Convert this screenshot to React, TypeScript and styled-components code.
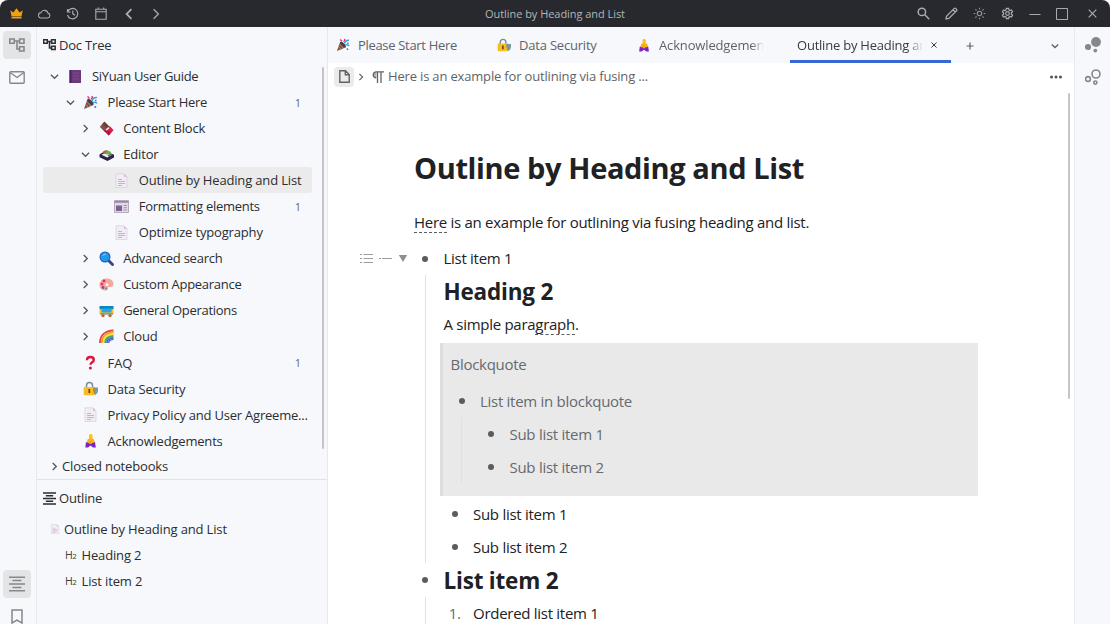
import React from "react";
import styled, { createGlobalStyle } from "styled-components";

const Global = createGlobalStyle`
  * { box-sizing: border-box; }
  html, body { margin: 0; padding: 0; background: #fff; overflow: hidden; }
  body { font-family: "Open Sans", "Noto Sans", sans-serif; color: #2b2d31; }
  svg { display: block; flex: none; }
`;

const Window = styled.div`
  width: 1110px;
  height: 624px;
  display: flex;
  flex-direction: column;
  overflow: hidden;
  border-radius: 8px 8px 0 0;
  background: #f6f8fb;
`;

const TitleBar = styled.header`
  height: 27px;
  flex: none;
  display: grid;
  grid-template-columns: 1fr auto 1fr;
  align-items: center;
  background: #27292f;
  color: #a9abae;
`;
const BarTitle = styled.div`
  font-size: 11px;
  line-height: 16px;
  letter-spacing: -0.05px;
  color: #b4b6b9;
  white-space: nowrap;
`;
const BarIcons = styled.div<{ $end?: boolean }>`
  display: flex;
  align-items: center;
  justify-content: ${(p) => (p.$end ? "flex-end" : "flex-start")};
  padding-left: ${(p) => (p.$end ? 0 : 3)}px;
`;
const BarButton = styled.span<{ $w?: number }>`
  width: ${(p) => p.$w ?? 27.9}px;
  height: 27px;
  display: flex;
  align-items: center;
  justify-content: center;
`;

const Body = styled.div`
  flex: 1;
  min-height: 0;
  display: flex;
`;
const Dock = styled.nav<{ $right?: boolean }>`
  width: ${(p) => (p.$right ? 36 : 37)}px;
  flex: none;
  display: flex;
  flex-direction: column;
  align-items: center;
  padding-top: 4px;
  padding-${(p) => (p.$right ? "left" : "right")}: ${(p) => (p.$right ? 1 : 2)}px;
  border-${(p) => (p.$right ? "left" : "right")}: 1px solid #e8eaed;
  color: #85878a;
`;
const DockButton = styled.span<{ $active?: boolean }>`
  width: 28px;
  height: 28px;
  flex: none;
  margin-bottom: 4px;
  border-radius: 4px;
  display: flex;
  align-items: center;
  justify-content: center;
  background: ${(p) => (p.$active ? "#e3e4e6" : "transparent")};
`;
const LastDockButton = styled(DockButton)`
  margin-bottom: -6px;
`;
const Spacer = styled.div`
  flex: 1;
`;

const Panel = styled.aside`
  width: 291px;
  flex: none;
  display: flex;
  flex-direction: column;
  border-right: 1px solid #e6e8eb;
`;
const PanelHead = styled.div`
  height: 36px;
  flex: none;
  display: flex;
  align-items: center;
  gap: 3px;
  padding-left: 6px;
  font-size: 13px;
  letter-spacing: -0.2px;
`;
const TreeArea = styled.div`
  height: 390px;
  flex: none;
  display: flex;
`;
const Tree = styled.div`
  width: 269px;
  margin-left: 6px;
`;
const ScrollThumb = styled.div<{ $h: number; $top: number; $left: number }>`
  width: 2px;
  height: ${(p) => p.$h}px;
  margin: ${(p) => p.$top}px 0 0 ${(p) => p.$left}px;
  border-radius: 1px;
  background: #c3c5c8;
`;
const TreeRow = styled.div<{ $level: number; $active?: boolean }>`
  height: 26.06px;
  display: flex;
  align-items: center;
  padding-left: ${(p) => 3.5 + p.$level * 15.6}px;
  border-radius: 3px;
  background: ${(p) => (p.$active ? "#ebebec" : "transparent")};
`;
const Toggle = styled.span`
  width: 16px;
  display: flex;
  justify-content: center;
  color: #57595c;
`;
const IconCell = styled.span`
  width: 26px;
  padding-left: 5px;
  display: flex;
`;
const RowText = styled.span<{ $track?: number }>`
  flex: 1;
  padding-left: 3.5px;
  font-size: 13px;
  line-height: 20px;
  letter-spacing: ${(p) => p.$track ?? -0.15}px;
  white-space: nowrap;
`;
const Count = styled.span`
  width: 28px;
  text-align: center;
  font-size: 11px;
  color: #66686b;
`;
const ClosedRow = styled.div`
  height: 27px;
  flex: none;
  display: flex;
  align-items: center;
  padding-left: 9px;
  border-bottom: 1px solid #e0e2e5;
  font-size: 13px;
  letter-spacing: -0.15px;
`;
const OutlineList = styled.div`
  padding-top: 0;
`;
const OutlineRow = styled.div<{ $child?: boolean }>`
  height: 26.06px;
  display: flex;
  align-items: center;
  padding-left: ${(p) => (p.$child ? 28 : 13)}px;
  font-size: 13px;
  letter-spacing: -0.15px;
  white-space: nowrap;
`;
const HTag = styled.span`
  width: 16.5px;
  font-size: 10.5px;
  letter-spacing: -0.4px;
  color: #3c3e42;
  small { font-size: 8px; }
`;
const OutlineIcon = styled.span`
  width: 14px;
`;

const Main = styled.main`
  flex: 1;
  min-width: 0;
  display: flex;
  flex-direction: column;
  background: #fff;
`;
const TabBar = styled.div`
  height: 36px;
  flex: none;
  display: flex;
  padding-left: 8px;
  background: #f6f8fb;
  color: #5f6368;
`;
const Tab = styled.div<{ $w: number; $active?: boolean }>`
  width: ${(p) => p.$w}px;
  flex: none;
  display: flex;
  align-items: center;
  gap: 8px;
  padding-left: ${(p) => (p.$active ? 7 : 0)}px;
  padding-top: 3px;
  border-bottom: 3px solid ${(p) => (p.$active ? "#3769d6" : "transparent")};
  color: ${(p) => (p.$active ? "#3a3c40" : "#5f6368")};
`;
const TabText = styled.span<{ $w?: number; $fade?: boolean; $track?: number }>`
  width: ${(p) => (p.$w ? p.$w + "px" : "auto")};
  overflow: hidden;
  white-space: nowrap;
  font-size: 13px;
  line-height: 20px;
  letter-spacing: ${(p) => p.$track ?? -0.15}px;
  ${(p) => p.$fade && "mask-image: linear-gradient(to right, #000 88%, transparent);"}
`;
const TabTool = styled.span<{ $w: number }>`
  width: ${(p) => p.$w}px;
  display: flex;
  align-items: center;
  justify-content: center;
  padding-top: 1px;
`;
const Breadcrumb = styled.div`
  height: 27px;
  flex: none;
  display: flex;
  align-items: center;
  padding: 0 11px 0 6px;
  font-size: 13px;
  color: #5f6368;
`;
const CrumbDoc = styled.span`
  width: 20px;
  height: 20px;
  border-radius: 4px;
  background: #ebebec;
  display: flex;
  align-items: center;
  justify-content: center;
  margin-right: 3px;
`;
const CrumbText = styled.span`
  flex: 1;
  padding: 0 0 2px 4px;
  white-space: nowrap;
  letter-spacing: -0.17px;
`;
const Pilcrow = styled.svg`
  margin-left: 7px;
`;
const EditorArea = styled.div`
  flex: 1;
  min-height: 0;
  display: flex;
`;
const Editor = styled.article`
  width: 650px;
  flex: none;
  padding: 56px 0 0 86px;
  color: #202124;
`;
const DocTitle = styled.h1`
  margin: 0 0 16px;
  font-size: 29px;
  line-height: 44px;
  font-weight: 700;
  letter-spacing: -0.38px;
  white-space: nowrap;
`;
const Block = styled.p`
  margin: 0;
  height: 33px;
  line-height: 33px;
  font-size: 15px;
  letter-spacing: -0.28px;
  white-space: nowrap;
`;
const Intro = styled(Block)`
  margin-bottom: 3px;
`;
const Heading = styled.h2`
  margin: 0;
  height: 33px;
  line-height: 33px;
  font-size: 22.5px;
  font-weight: 700;
  letter-spacing: -0.2px;
  white-space: nowrap;
`;
const Ref = styled.span`
  border-bottom: 1px dashed #5c5e62;
`;
const Item = styled.div`
  position: relative;
  display: grid;
  grid-template-columns: 29.5px 1fr;
`;
const Marker = styled.div`
  display: flex;
  flex-direction: column;
  align-items: center;
  padding-right: 7px;
`;
const Bullet = styled.span`
  width: 6px;
  height: 6px;
  margin: 13.5px 0;
  flex: none;
  border-radius: 50%;
  background: #5a5c60;
`;
const Ordinal = styled.span`
  height: 33px;
  line-height: 33px;
  font-size: 15px;
  letter-spacing: -0.3px;
  color: #6b6d71;
`;
const Guide = styled.span<{ $dim?: boolean }>`
  flex: 1;
  width: 1px;
  margin-bottom: 1px;
  background: ${(p) => (p.$dim ? "#dfe0e1" : "#e1e2e4")};
`;
const Quote = styled.blockquote`
  margin: 2px 0 1.5px -3.5px;
  height: 153px;
  padding: 5px 0 0 7.5px;
  border-left: 3px solid #dcdddf;
  background: #e9e9ea;
  color: #66696e;
`;
const QuoteText = styled(Block)`
  margin-bottom: 3.5px;
`;
const Gutter = styled.div`
  position: absolute;
  left: -54px;
  top: 10px;
  height: 13px;
  display: flex;
  align-items: center;
  gap: 6px;
`;

const stroke = (w = 1.3) => ({
  fill: "none",
  stroke: "currentColor",
  strokeWidth: w,
});

const Chevron = ({ dir, s = 10, w = 1.5 }: { dir: "down" | "right" | "left"; s?: number; w?: number }) => (
  <svg width={s} height={s} viewBox="0 0 10 10" {...stroke(w)}>
    <path d={dir === "down" ? "M1 3l4 4 4-4" : dir === "right" ? "M3 1l4 4-4 4" : "M7 1L3 5l4 4"} />
  </svg>
);
const TreeIcon = ({ s = 16, w = 1.6 }: { s?: number; w?: number }) => (
  <svg width={s} height={s * 0.875} viewBox="0 0 16 14" {...stroke(w)}>
    <path d="M.8 1h4.4v4.2H.8zM10.6 1H15v4.2h-4.4zM10.6 8.8H15V13h-4.4zM5.2 3h5.4M8 3v8h2.6" />
  </svg>
);
const MailIcon = () => (
  <svg width="16" height="13" viewBox="0 0 16 13" {...stroke(1.4)}>
    <rect x=".8" y=".8" width="14.4" height="11.4" rx="1" />
    <path d="M1 1.5l7 5 7-5" />
  </svg>
);
const LinesIcon = ({ s = 16 }: { s?: number }) => (
  <svg width={s} height={s} viewBox="0 0 16 16" {...stroke(s < 15 ? 2 : 1.5)}>
    <path d="M0 1.2h16M3.5 4.6h9M0 8h16M3.5 11.4h9M0 14.8h16" />
  </svg>
);
const BookmarkIcon = () => (
  <svg width="12" height="15" viewBox="0 0 12 15" {...stroke(1.5)}>
    <path d="M1 1h10v13L6 11l-5 3z" />
  </svg>
);
const GraphIcon = ({ filled }: { filled?: boolean }) => (
  <svg width="16" height="16" viewBox="0 0 16 16" fill={filled ? "currentColor" : "none"} stroke="currentColor" strokeWidth={filled ? 0 : 1.6}>
    <circle cx="11" cy="5" r={filled ? 4.9 : 4} />
    <circle cx="3" cy="10" r={filled ? 3.1 : 2.4} />
    <circle cx="10.3" cy="13.6" r={filled ? 1.9 : 1.6} />
  </svg>
);

const CrownIcon = () => (
  <svg width="13" height="11" viewBox="0 0 13 11" fill="#f5a00c">
    <path d="M.3 2.200l3 2.400L6.500 .3l3.200 4.300 3-2.400-1.200 6H1.500zM1.500 8.800h10v1.700h-10z" />
  </svg>
);
const CloudIcon = () => (
  <svg width="13" height="10" viewBox="0 0 13 10" {...stroke(1.1)}>
    <path d="M3.300 9h6.400a2.500 2.500 0 0 0 .3-4.900A3.700 3.700 0 0 0 3 3.600 2.700 2.700 0 0 0 3.300 9z" />
  </svg>
);
const HistoryIcon = () => (
  <svg width="13" height="13" viewBox="0 0 13 13" {...stroke(1.2)}>
    <path d="M1.500 2v3h3M1.700 4.700A5.200 5.200 0 1 1 1.500 8M6.800 3.600v3.200l2.300 1.500" />
  </svg>
);
const CalendarIcon = () => (
  <svg width="12" height="13" viewBox="0 0 12 13" {...stroke(1.1)}>
    <path d="M.8 2.300h10.400v9.900H.8zM.8 4.800h10.400M3.300 .4v2M8.700 .4v2" />
  </svg>
);
const SearchIcon = () => (
  <svg width="13" height="13" viewBox="0 0 13 13" {...stroke(1.5)}>
    <circle cx="4.900" cy="4.900" r="3.700" />
    <path d="M7.800 7.800l4.400 4.400" />
  </svg>
);
const PencilIcon = () => (
  <svg width="13" height="13" viewBox="0 0 13 13" {...stroke(1.3)}>
    <path d="M1 12l.5-2.800L9.300 1.400a.9.9 0 0 1 1.300 0l1 1a.9.9 0 0 1 0 1.300L3.800 11.500zM8 2.700L10.300 5" />
  </svg>
);
const SunIcon = () => (
  <svg width="13" height="13" viewBox="0 0 13 13" {...stroke(1.1)} opacity=".85">
    <circle cx="6.500" cy="6.500" r="2.200" />
    <path d="M6.500 .7v1.600M6.500 10.700v1.600M.7 6.500h1.600M10.700 6.500h1.600M2.400 2.400l1.100 1.100M9.500 9.500l1.100 1.100M2.400 10.600l1.100-1.100M9.500 3.500l1.100-1.100" />
  </svg>
);
const GearIcon = () => (
  <svg width="13" height="13" viewBox="0 0 13 12" {...stroke(1.2)}>
    <path d="M5.400 .8h2.200l.3 1.600 1.100.6 1.500-.6 1.100 1.900-1.200 1v1.400l1.200 1-1.100 1.900-1.500-.6-1.100.6-.3 1.600H5.400l-.3-1.600L4 9l-1.500.6-1.100-1.900 1.200-1V5.300l-1.200-1 1.100-1.900L4 3l1.100-.6z" />
    <circle cx="6.500" cy="6" r="1.800" />
  </svg>
);
const MinIcon = () => (
  <svg width="12" height="12" viewBox="0 0 12 12" {...stroke(1)}><path d="M.5 6.500h11" /></svg>
);
const MaxIcon = () => (
  <svg width="12" height="12" viewBox="0 0 12 12" {...stroke(1)}><path d="M.5 .5h11v11H.5z" /></svg>
);
const CloseIcon = ({ s = 9, w = 1.2 }: { s?: number; w?: number }) => (
  <svg width={s} height={s} viewBox="0 0 9 9" {...stroke(w)}><path d="M.7 .7l7.600 7.600M8.300 .7L.7 8.300" /></svg>
);

type Glyph = "book" | "party" | "choco" | "tray" | "page" | "news" | "search" | "palette" | "cart" | "rainbow" | "question" | "lock" | "person";

const glyphs: Record<Glyph, React.ReactNode> = {
  book: (
    <>
      <rect x="1.500" y="1" width="11.500" height="13" rx=".5" fill="#6b3a7c" />
      <path d="M1.500 1h2v13h-2z" fill="#4d2361" />
      <path d="M5 4h6M5 7h6M5 10h6" stroke="#80508f" strokeWidth=".8" />
    </>
  ),
  party: (
    <>
      <path d="M4.500 4L10.500 10 1 14z" fill="#7a5548" />
      <path d="M4 6.500l4 4.500M3 9.500l2.500 3" stroke="#c9a04a" strokeWidth=".8" />
      <ellipse cx="7.500" cy="7" rx="1.600" ry="4" transform="rotate(-45 7.500 7)" fill="#4d3b4b" />
      <path d="M4.500 1.500l2 2M8 4q2-1 1-3" stroke="#e8336d" strokeWidth="1.500" fill="none" />
      <path d="M9 6q1-4 5-3.500M10 7.500q3-1 4 1" stroke="#2ea7e0" strokeWidth="1.500" fill="none" />
      <path d="M12 5.500h1.500M11.500 11.500l1.500 1" stroke="#ab47bc" strokeWidth="1.600" />
    </>
  ),
  choco: (
    <>
      <path d="M5.500 .7l5 5-5 5-4.700-5z" fill="#825044" />
      <path d="M5.500 .7l5 5-2.300 2.300-5-4.900z" fill="#6e3f34" />
      <path d="M11 5.200l3.500 4-4.700 5.300-4.500-4.400z" fill="#d81b50" />
      <path d="M5.300 10.100l2-2 4.300 4.200-1.800 2.200z" fill="#b70f3f" />
      <path d="M6.500 8.500l2.800-2.500 1.200 1.200-2.800 2.500z" fill="#f4d7dc" />
    </>
  ),
  tray: (
    <>
      <path d="M.5 7.500L6 4l9 3.800v2.700L8.500 14 .5 10.200z" fill="#2c2344" />
      <path d="M2.500 7.800L7 5.500l6 2.300-4.800 2.700z" fill="#eceff1" />
      <path d="M4 6Q5 2.500 9 3.500q3.500 1 3.500 4L8 7.500z" fill="#58b947" />
      <path d="M3.500 5.200Q5 3 8 3.200L6.200 7z" fill="#d6552d" />
      <path d="M9 8.800l3-1.300" stroke="#5b3577" strokeWidth="1.200" />
    </>
  ),
  page: (
    <>
      <path d="M2 .8h8l3 3v10.700H2z" fill="#f2edf5" stroke="#dccfe2" strokeWidth=".8" />
      <path d="M10 .8v3h3z" fill="#cfbdd6" />
      <path d="M4 6.500h4M4 8.500h7M4 10.500h7M4 12.500h4" stroke="#c2acca" strokeWidth=".9" />
    </>
  ),
  news: (
    <>
      <path d="M.5 1.500h14v12H.5z" fill="#e2d9e6" stroke="#b3a2bc" strokeWidth=".9" />
      <path d="M.5 2.800h14" stroke="#9a86a6" strokeWidth="1.800" />
      <path d="M2 6.500h6V12H2z" fill="#7c6389" />
      <path d="M9.500 6.500H13M9.500 8.700H13M9.500 11H13" stroke="#a592ae" strokeWidth="1.100" />
    </>
  ),
  search: (
    <>
      <path d="M9.500 9.500l4 4" stroke="#40427e" strokeWidth="2.900" strokeLinecap="round" />
      <circle cx="6" cy="6" r="4.900" fill="#1e9bf0" stroke="#2264b9" strokeWidth="1.200" />
      <path d="M3.500 5Q4.500 3 7 3" stroke="#8ad3ff" strokeWidth="1" fill="none" />
    </>
  ),
  palette: (
    <>
      <path d="M7.500 1.500C3 1.500.5 4.500.5 8s2.500 5.500 6.500 5.500c1.500 0 1.600-1 1.500-2s.5-1.700 2-1.500c2.300.3 4-1 4-3.300 0-3.200-3-5.200-7-5.200z" fill="#f8a79f" />
      <circle cx="3" cy="7" r="1.500" fill="#f1366d" />
      <circle cx="5" cy="3.900" r="1.400" fill="#d92f45" />
      <circle cx="4" cy="10.500" r="1.400" fill="#8a4a9e" />
      <circle cx="7.300" cy="11.500" r="1.100" fill="#4b9e56" />
      <circle cx="8" cy="7.700" r="1.400" fill="#fff" />
    </>
  ),
  cart: (
    <>
      <path d="M.5 3h14v3.500H.5z" fill="#0d86bd" />
      <path d="M.5 6.500h14V11H.5z" fill="#f7c02d" />
      <path d="M2.500 5.500h10v4h-10z" fill="#25a8dc" />
      <path d="M1 11h13" stroke="#5b5360" strokeWidth=".8" />
      <circle cx="4" cy="12.600" r="1.700" fill="#b96a24" />
      <circle cx="11" cy="12.600" r="1.700" fill="#b96a24" />
    </>
  ),
  rainbow: (
    <g fill="none" strokeWidth="1.900">
      <path d="M1 14C1 6.500 6 1.800 14.500 1.500" stroke="#e8443a" />
      <path d="M2.800 14C2.800 7.800 7 3.700 14.500 3.300" stroke="#fb9d2b" />
      <path d="M4.600 14C4.600 9 8 5.500 14.500 5.100" stroke="#f6e03a" />
      <path d="M6.300 14c0-4 3-6.700 8.200-7.100" stroke="#41ad4e" />
      <path d="M8 14c0-3 2.500-5 6.500-5.300" stroke="#3b79d8" />
      <path d="M9.700 14c0-2 2-3.400 4.800-3.600" stroke="#7a50b8" strokeWidth="1.300" />
    </g>
  ),
  question: (
    <>
      <path d="M4 5.200C4 3 5.500 2 7.400 2c2.100 0 3.400 1.100 3.400 2.900 0 2.300-3.300 2.500-3.300 4.900" fill="none" stroke="#de1738" strokeWidth="2.400" />
      <circle cx="7.400" cy="13" r="1.500" fill="#de1738" />
    </>
  ),
  lock: (
    <>
      <path d="M3.500 7V4.500a3 3 0 0 1 6 0V7" fill="none" stroke="#7c8b95" strokeWidth="1.500" />
      <rect x=".7" y="6" width="11.500" height="8.200" rx="1" fill="#f8bd20" />
      <path d="M6.300 8v4" stroke="#54421c" strokeWidth="1.600" />
      <path d="M10 6.500h5v3q0 3-2.500 4.500Q10 12.500 10 9.500z" fill="#6c9cb2" />
      <path d="M12.500 7v6Q11 12 11 9.500V7z" fill="#b38a49" />
    </>
  ),
  person: (
    <>
      <rect x="6" y="1" width="3.500" height="5.500" rx="1.500" fill="#fcc21b" />
      <path d="M4.500 6.500q3-2.500 6.500 0L12 10H3.500z" fill="#fbb510" />
      <path d="M3 9l2 1h5l2-1 .8 5.500H10l-2.500-2-2.500 2H2.300z" fill="#7a25c9" />
      <path d="M6.300 8h2.500v3H6.300z" fill="#f5a512" />
    </>
  ),
};
const GlyphIcon = ({ name, s = 15 }: { name: Glyph; s?: number }) => (
  <svg width={s} height={s} viewBox="0 0 15 15">{glyphs[name]}</svg>
);

type Node = { level: number; open?: boolean; closed?: boolean; icon: Glyph; label: string; count?: number; active?: boolean; track?: number };
const nodes: Node[] = [
  { level: 0, open: true, icon: "book", label: "SiYuan User Guide", track: -0.33 },
  { level: 1, open: true, icon: "party", label: "Please Start Here", count: 1, track: -0.28 },
  { level: 2, closed: true, icon: "choco", label: "Content Block", track: -0.2 },
  { level: 2, open: true, icon: "tray", label: "Editor" },
  { level: 3, icon: "page", label: "Outline by Heading and List", active: true, track: -0.16 },
  { level: 3, icon: "news", label: "Formatting elements", count: 1, track: -0.27 },
  { level: 3, icon: "page", label: "Optimize typography", track: -0.16 },
  { level: 2, closed: true, icon: "search", label: "Advanced search", track: -0.25 },
  { level: 2, closed: true, icon: "palette", label: "Custom Appearance", track: -0.27 },
  { level: 2, closed: true, icon: "cart", label: "General Operations", track: -0.3 },
  { level: 2, closed: true, icon: "rainbow", label: "Cloud" },
  { level: 1, icon: "question", label: "FAQ", count: 1 },
  { level: 1, icon: "lock", label: "Data Security", track: -0.2 },
  { level: 1, icon: "page", label: "Privacy Policy and User Agreeme...", track: -0.22 },
  { level: 1, icon: "person", label: "Acknowledgements", track: -0.2 },
];

const ListItem = ({ ordinal, guide, dim, children }: { ordinal?: string; guide?: boolean; dim?: boolean; children: React.ReactNode }) => (
  <Item>
    <Marker>
      {ordinal ? <Ordinal>{ordinal}</Ordinal> : <Bullet />}
      {guide && <Guide $dim={dim} />}
    </Marker>
    <div>{children}</div>
  </Item>
);

export default function App() {
  return (
    <>
      <Global />
      <Window>
        <TitleBar>
          <BarIcons>
            <BarButton><CrownIcon /></BarButton>
            <BarButton><CloudIcon /></BarButton>
            <BarButton><HistoryIcon /></BarButton>
            <BarButton><CalendarIcon /></BarButton>
            <BarButton><Chevron dir="left" s={12} w={1.5} /></BarButton>
            <BarButton><Chevron dir="right" s={12} w={1.1} /></BarButton>
          </BarIcons>
          <BarTitle>Outline by Heading and List</BarTitle>
          <BarIcons $end>
            <BarButton><SearchIcon /></BarButton>
            <BarButton><PencilIcon /></BarButton>
            <BarButton><SunIcon /></BarButton>
            <BarButton><GearIcon /></BarButton>
            <BarButton $w={27}><MinIcon /></BarButton>
            <BarButton $w={27}><MaxIcon /></BarButton>
            <BarButton $w={35}><CloseIcon /></BarButton>
          </BarIcons>
        </TitleBar>
        <Body>
          <Dock>
            <DockButton $active><TreeIcon /></DockButton>
            <DockButton><MailIcon /></DockButton>
            <Spacer />
            <DockButton $active><LinesIcon /></DockButton>
            <LastDockButton><BookmarkIcon /></LastDockButton>
          </Dock>
          <Panel>
            <PanelHead><TreeIcon s={13} w={1.9} />Doc Tree</PanelHead>
            <TreeArea>
              <Tree>
                {nodes.map((n) => (
                  <TreeRow key={n.label} $level={n.level} $active={n.active}>
                    <Toggle>{(n.open || n.closed) && <Chevron dir={n.open ? "down" : "right"} s={9} />}</Toggle>
                    <IconCell><GlyphIcon name={n.icon} /></IconCell>
                    <RowText $track={n.track}>{n.label}</RowText>
                    {n.count && <Count>{n.count}</Count>}
                  </TreeRow>
                ))}
              </Tree>
              <ScrollThumb $h={382} $top={4} $left={10} />
            </TreeArea>
            <ClosedRow><Toggle><Chevron dir="right" s={9} /></Toggle>Closed notebooks</ClosedRow>
            <PanelHead><LinesIcon s={13} />Outline</PanelHead>
            <OutlineList>
              <OutlineRow><OutlineIcon><GlyphIcon name="page" s={10} /></OutlineIcon>Outline by Heading and List</OutlineRow>
              <OutlineRow $child><HTag>H<small>2</small></HTag>Heading 2</OutlineRow>
              <OutlineRow $child><HTag>H<small>2</small></HTag>List item 2</OutlineRow>
            </OutlineList>
          </Panel>
          <Main>
            <TabBar>
              <Tab $w={161}><GlyphIcon name="party" s={14} /><TabText $track={-0.32}>Please Start Here</TabText></Tab>
              <Tab $w={140}><GlyphIcon name="lock" s={14} /><TabText $track={-0.2}>Data Security</TabText></Tab>
              <Tab $w={153}><GlyphIcon name="person" s={14} /><TabText $w={105} $fade>Acknowledgements</TabText></Tab>
              <Tab $w={161} $active><TabText $w={126} $fade $track={-0.22}>Outline by Heading and List</TabText><CloseIcon s={6} w={1.5} /></Tab>
              <TabTool $w={38}>
                <svg width="8" height="8" viewBox="0 0 8 8" {...stroke(1.2)}><path d="M4 .5v7M.5 4h7" /></svg>
              </TabTool>
              <Spacer />
              <TabTool $w={38}><Chevron dir="down" s={8} w={1.7} /></TabTool>
            </TabBar>
            <Breadcrumb>
              <CrumbDoc>
                <svg width="11" height="13" viewBox="0 0 11 13" {...stroke(1.4)}><path d="M.8 .8h5.700l3.700 3.700v7.700H.8zM6.300 .8v3.900h3.900" /></svg>
              </CrumbDoc>
              <Chevron dir="right" s={8} w={1.5} />
              <Pilcrow width="12" height="12" viewBox="0 0 12 12" {...stroke(1.3)}>
                <path d="M4.200 6.800a3 3 0 0 1 0-6H12M5.500 .8V12M9 .8V12" />
                <path d="M4.500 1.200a2.600 2.600 0 0 0 0 5.200z" fill="currentColor" stroke="none" opacity=".5" />
              </Pilcrow>
              <CrumbText>Here is an example for outlining via fusing ...</CrumbText>
              <svg width="14" height="4" viewBox="0 0 14 4" fill="#505256"><circle cx="2.500" cy="2" r="1.500" /><circle cx="7" cy="2" r="1.500" /><circle cx="11.500" cy="2" r="1.500" /></svg>
            </Breadcrumb>
            <EditorArea>
              <Editor>
                <DocTitle>Outline by Heading and List</DocTitle>
                <Intro><Ref>Here</Ref> is an example for outlining via fusing heading and list.</Intro>
                <Item>
                  <Gutter>
                    <svg width="13" height="11" viewBox="0 0 13 11" fill="none" stroke="#9a9c9f" strokeWidth="1.200"><path d="M0 1.500h2M3.500 1.500H13M0 5.500h2M3.500 5.500H13M0 9.500h2M3.500 9.500H13" /></svg>
                    <svg width="13" height="11" viewBox="0 0 13 11" fill="none" stroke="#9a9c9f" strokeWidth="1.200"><path d="M0 5.500h2M3 5.500h10" /></svg>
                    <svg width="10" height="11" viewBox="0 0 10 11" fill="#8d8f92"><path d="M.8 2h8.400L5 9z" /></svg>
                  </Gutter>
                  <Marker><Bullet /><Guide /></Marker>
                  <div>
                    <Block>List item 1</Block>
                    <Heading>Heading 2</Heading>
                    <Block>A simple para<Ref>graph</Ref>.</Block>
                    <Quote>
                      <QuoteText>Blockquote</QuoteText>
                      <ListItem guide dim>
                        <Block>List item in blockquote</Block>
                        <ListItem><Block>Sub list item 1</Block></ListItem>
                        <ListItem><Block>Sub list item 2</Block></ListItem>
                      </ListItem>
                    </Quote>
                    <ListItem><Block>Sub list item 1</Block></ListItem>
                    <ListItem><Block>Sub list item 2</Block></ListItem>
                  </div>
                </Item>
                <ListItem guide>
                  <Heading>List item 2</Heading>
                  <ListItem ordinal="1."><Block>Ordered list item 1</Block></ListItem>
                </ListItem>
              </Editor>
              <ScrollThumb $h={306} $top={3} $left={90} />
            </EditorArea>
          </Main>
          <Dock $right>
            <DockButton><GraphIcon filled /></DockButton>
            <DockButton><GraphIcon /></DockButton>
          </Dock>
        </Body>
      </Window>
    </>
  );
}
